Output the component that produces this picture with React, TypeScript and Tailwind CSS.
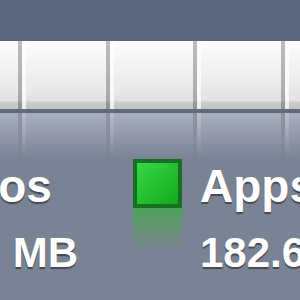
import React from "react";

const segments = [80, 79, 80, 11];

function BarDivider() {
  return (
    <div className="flex shrink-0">
      <div className="w-[4px] bg-black/25" />
      <div className="w-[4px] bg-white/70" />
    </div>
  );
}

function ReflectionDivider() {
  return (
    <div className="flex shrink-0">
      <div className="w-[4px] bg-gradient-to-b from-black/15 to-transparent" />
      <div className="w-[4px] bg-gradient-to-b from-white/20 to-transparent" />
    </div>
  );
}

export default function App() {
  return (
    <div className="w-[300px] h-[300px] overflow-hidden bg-[#7a8394] flex flex-col font-['Liberation_Sans',Arial,sans-serif]">
      <div className="h-[41px] shrink-0 bg-[#5c697d]" />

      {/* capacity bar */}
      <div className="h-[68px] shrink-0 flex bg-[linear-gradient(to_bottom,#fdfdfd,#e3e3e3_88%,#cdcdcd_90%,#c2c2c2)]">
        <div className="w-[18px] shrink-0" />
        {segments.map((w, i) => (
          <React.Fragment key={i}>
            <BarDivider />
            <div className="shrink-0" style={{ width: w }} />
          </React.Fragment>
        ))}
      </div>
      <div className="h-[4px] shrink-0 bg-[#5f6b80]" />

      {/* reflection */}
      <div className="h-[46px] shrink-0 flex bg-gradient-to-b from-[#a9b0bd] to-[#7a8394]">
        <div className="w-[18px] shrink-0" />
        {segments.map((w, i) => (
          <React.Fragment key={i}>
            <ReflectionDivider />
            <div className="shrink-0" style={{ width: w }} />
          </React.Fragment>
        ))}
      </div>

      {/* legend */}
      <div className="flex items-start ml-[-104px] text-white font-bold [text-shadow:0_2px_1px_rgba(0,0,0,0.45)]">
        <div className="w-[237px] shrink-0 flex flex-col mt-[4px] whitespace-nowrap">
          <span className="text-[46px] leading-none">Photos</span>
          <span className="text-[42px] leading-none mt-[23px]">124.9 MB</span>
        </div>
        <div className="flex flex-col shrink-0">
          <div className="w-[49px] h-[49px] border-[4px] border-[#17701f] bg-gradient-to-br from-[#36d848] to-[#0fa91d]" />
          <div className="w-[49px] h-[42px] bg-gradient-to-b from-[#4aa356] via-[#5f9a6a]/70 to-transparent" />
        </div>
        <div className="ml-[18px] flex flex-col mt-[4px] whitespace-nowrap">
          <span className="text-[46px] leading-none">Apps</span>
          <span className="text-[42px] leading-none mt-[23px]">182.6 MB</span>
        </div>
      </div>
    </div>
  );
}
